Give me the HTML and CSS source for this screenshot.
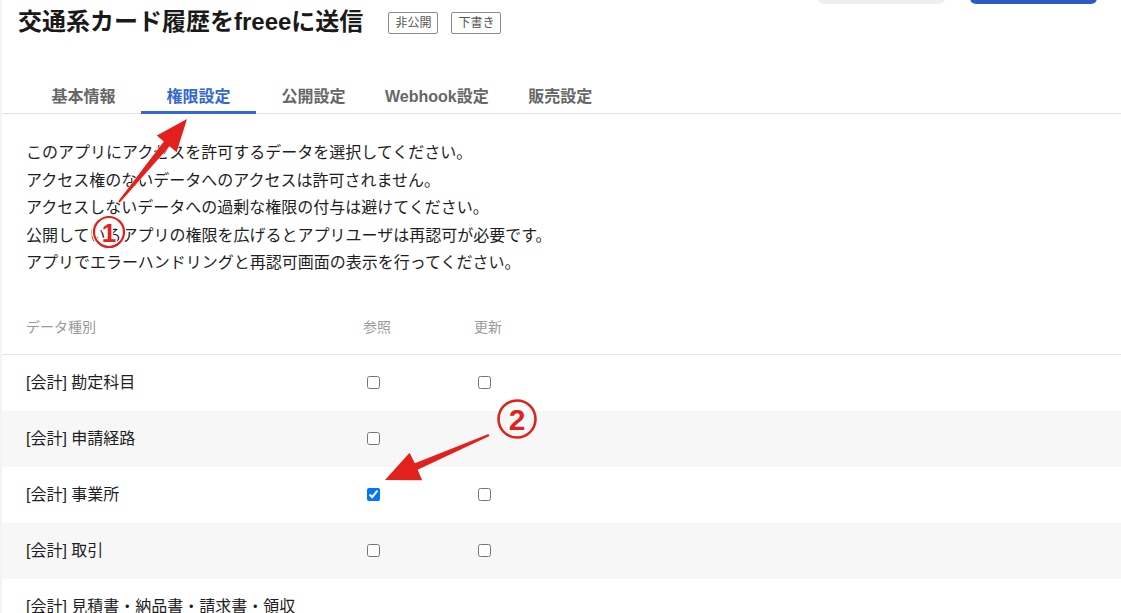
FILE: index.html
```html
<!DOCTYPE html>
<html lang="ja">
<head>
<meta charset="utf-8">
<title>交通系カード履歴をfreeeに送信</title>
<link rel="stylesheet" href="styles.css">
</head>
<body>
<div class="page">
  <header class="header">
    <h1 class="title">交通系カード履歴をfreeeに送信</h1>
    <span class="badge badge-first">非公開</span>
    <span class="badge">下書き</span>
    <div class="actions">
      <button class="btn btn-secondary" type="button"></button>
      <button class="btn btn-primary" type="button"></button>
    </div>
  </header>

  <nav class="tabs">
    <a class="tab">基本情報</a>
    <a class="tab tab-active">権限設定</a>
    <a class="tab">公開設定</a>
    <a class="tab">Webhook設定</a>
    <a class="tab">販売設定</a>
  </nav>

  <div class="desc">
    <p>このアプリにアクセスを許可するデータを選択してください。</p>
    <p>アクセス権のないデータへのアクセスは許可されません。</p>
    <p>アクセスしないデータへの過剰な権限の付与は避けてください。</p>
    <p>公開しているアプリの権限を広げるとアプリユーザは再認可が必要です。</p>
    <p>アプリでエラーハンドリングと再認可画面の表示を行ってください。</p>
  </div>

  <div class="perm-table">
    <div class="row row-head">
      <div class="cell-name">データ種別</div>
      <div class="cell-check">参照</div>
      <div class="cell-check">更新</div>
    </div>
    <div class="row">
      <div class="cell-name">[会計] 勘定科目</div>
      <div class="cell-check"><input type="checkbox"></div>
      <div class="cell-check"><input type="checkbox"></div>
    </div>
    <div class="row row-alt">
      <div class="cell-name">[会計] 申請経路</div>
      <div class="cell-check"><input type="checkbox"></div>
      <div class="cell-check"></div>
    </div>
    <div class="row">
      <div class="cell-name">[会計] 事業所</div>
      <div class="cell-check"><input type="checkbox" checked></div>
      <div class="cell-check"><input type="checkbox"></div>
    </div>
    <div class="row row-alt">
      <div class="cell-name">[会計] 取引</div>
      <div class="cell-check"><input type="checkbox"></div>
      <div class="cell-check"><input type="checkbox"></div>
    </div>
    <div class="row row-tall">
      <div class="cell-name">[会計] 見積書・納品書・請求書・領収書・発注書</div>
      <div class="cell-check"><input type="checkbox"></div>
      <div class="cell-check"><input type="checkbox"></div>
    </div>
  </div>
</div>

<svg class="annot" width="1121" height="613" viewBox="0 0 1121 613" xmlns="http://www.w3.org/2000/svg">
  <g class="mark">
    <polygon points="119.6,202.8 169.6,146.2 176.6,152.2 187,119 156.8,135.6 163.8,141.4 118.2,201.2" fill="#e3211c" stroke="#fff" stroke-width="1" stroke-linejoin="round" paint-order="stroke"/>
    <circle cx="109" cy="232" r="15" fill="none" stroke="#fff" stroke-width="4.5"/>
    <circle cx="109" cy="232" r="15" fill="none" stroke="#e3211c" stroke-width="2.2"/>
    <text x="109" y="241.5" class="num num1">1</text>
  </g>
  <g class="mark">
    <polygon points="489.5,436.1 417.6,469.7 422.2,480.2 385,480 409.6,452.8 414.8,463.3 488.5,433.9" fill="#e3211c" stroke="#fff" stroke-width="1" stroke-linejoin="round" paint-order="stroke"/>
    <circle cx="517" cy="419" r="18.5" fill="none" stroke="#fff" stroke-width="4.5"/>
    <circle cx="517" cy="419" r="18.5" fill="none" stroke="#e3211c" stroke-width="2.6"/>
    <text x="517" y="430" class="num num2">2</text>
  </g>
</svg>
</body>
</html>
```

FILE: styles.css
```css
* { box-sizing: border-box; }

html, body {
  margin: 0;
  padding: 0;
}

body {
  position: relative;
  width: 1121px;
  height: 613px;
  overflow: hidden;
  background: #f4f4f4;
  font-family: "Liberation Sans", "Noto Sans CJK JP", sans-serif;
  color: #222;
}

.page {
  margin-left: 2px;
  min-height: 613px;
  background: #fff;
}

/* header */
.header {
  display: flex;
  align-items: flex-start;
  height: 44px;
  padding: 0 24px 0 16px;
}

.title {
  margin: 6px 0 0 0;
  font-size: 24px;
  line-height: 32px;
  font-weight: 700;
  color: #1a1a1a;
  white-space: nowrap;
}

.badge {
  margin-top: 12px;
  margin-left: 13px;
  height: 22px;
  padding: 0 6px;
  border: 1px solid #8c8c8c;
  border-radius: 2px;
  font-size: 12px;
  line-height: 20px;
  color: #555;
  white-space: nowrap;
}

.badge-first { margin-left: 25px; }

.actions {
  display: flex;
  gap: 25px;
  margin-left: auto;
  margin-top: -32px;
}

.btn {
  width: 127px;
  height: 36px;
  border: none;
  border-radius: 6px;
  padding: 0;
}

.btn-secondary { background: #efeeee; }
.btn-primary { background: #2b5cc6; }

/* tabs */
.tabs {
  display: flex;
  margin-top: 34px;
  padding-left: 24px;
  border-bottom: 1px solid #e2e2e2;
}

.tab {
  min-width: 115px;
  padding: 4px 14px 0;
  margin-bottom: -1px;
  text-align: center;
  font-size: 16px;
  line-height: 29px;
  font-weight: 700;
  color: #666;
  border-bottom: 3px solid transparent;
  white-space: nowrap;
}

.tab-active {
  color: #3567d2;
  border-bottom-color: #3567d2;
}

/* description */
.desc {
  margin-top: 25px;
  padding-left: 24px;
  font-size: 16px;
  line-height: 27.6px;
  color: #1e1e1e;
}

.desc p { margin: 0; }

/* permission table */
.perm-table {
  margin-top: 23px;
}

.row {
  display: grid;
  grid-template-columns: 337px 111px 111px 1fr;
  align-items: center;
  padding: 16px 0 16px 24px;
  font-size: 16px;
  line-height: 24px;
  color: #1e1e1e;
}

.row-alt { background: #f7f7f7; }

.row-tall .cell-name { padding-bottom: 16px; }

.row-head {
  height: 55px;
  padding-top: 0;
  padding-bottom: 0;
  border-bottom: 1px solid #e6e6e6;
  font-size: 14px;
  line-height: 20px;
  color: #9a9a9a;
}

.cell-name {
  padding-right: 56px;
}

.cell-check {
  display: flex;
  align-items: center;
}

.cell-check input {
  width: 13px;
  height: 13px;
  margin: 0 0 0 4px;
}

/* annotations */
.annot {
  position: absolute;
  top: 0;
  left: 0;
  pointer-events: none;
}

.num {
  font-family: "Liberation Sans", sans-serif;
  font-weight: 700;
  text-anchor: middle;
  fill: #e3211c;
  stroke: #fff;
  stroke-width: 3px;
  paint-order: stroke;
}

.num1 { font-size: 26px; }
.num2 { font-size: 30px; }
```
